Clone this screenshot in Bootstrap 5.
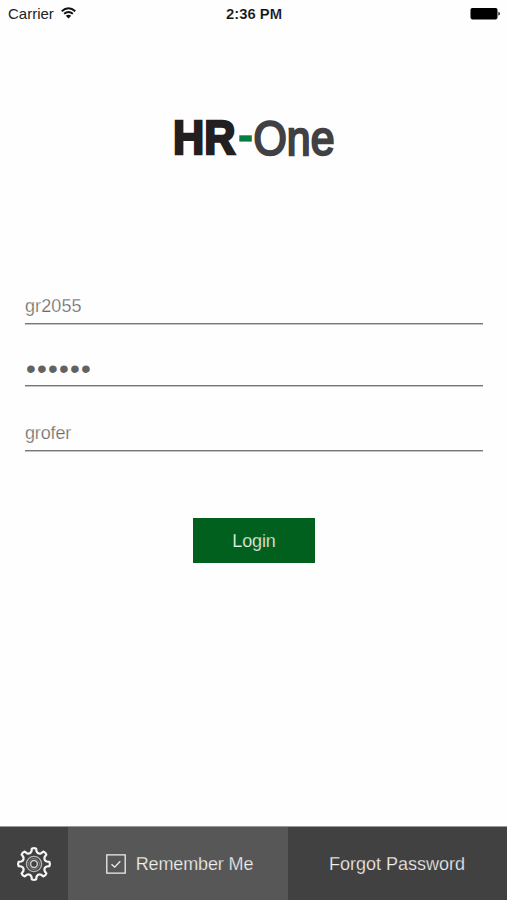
<!DOCTYPE html>
<html lang="en">
<head>
<meta charset="utf-8">
<meta name="viewport" content="width=device-width, initial-scale=1">
<title>HR-One</title>
<link href="https://cdn.jsdelivr.net/npm/bootstrap@5.3.0/dist/css/bootstrap.min.css" rel="stylesheet">
<style>
body { font-family: "Liberation Sans", Arial, sans-serif; font-size: 18px; height: 900px; overflow: hidden; background: #fefefe; }
svg { display: block; }
.status-bar { height: 28px; font-size: 15px; line-height: 28px; color: #222; padding: 0 7px 0 8px; }
.status-bar > div { flex: 1 1 0; }
.status-bar svg { margin-bottom: 2px; }
.wifi { margin-left: 7px; }
.status-time { font-size: 14.8px; text-align: center; color: #111; -webkit-text-stroke: .15px #fefefe; }
.brand { margin-top: 77px; }
.login-form { padding: 0 24px 0 25px; margin-top: 116px; }
.field { border-bottom: 1px solid #777; box-shadow: 0 1px 0 #c4c4c4; color: #6c6c6c; line-height: 24px; display: flex; align-items: flex-end; -webkit-text-stroke: .25px #fefefe; }
.field-user { height: 38px; padding-bottom: 5px; letter-spacing: .1px; }
.field-pass { height: 62px; padding: 0 0 4px 1px; font-size: 28px; letter-spacing: 1.2px; color: #626262; -webkit-text-stroke: 0; }
.field-company { height: 65px; padding-bottom: 5px; letter-spacing: -.15px; }
.btn-login { width: 122px; height: 45px; margin-top: 67px; background: #02601e; color: #f0f5f0; font-size: 18px; letter-spacing: -.1px; -webkit-text-stroke: .25px #02601e; padding-top: 8px; }
.btn-login:hover { background: #02601e; color: #fff; }
.bottom-bar { height: 74px; border-top: 1px solid #999; color: #f2f2f2; background: #414141; }
.bar-settings { width: 68px; }
.bar-remember { width: 220px; gap: 10px; background: #575757; letter-spacing: -.12px; padding-left: 3px; -webkit-text-stroke: .25px #575757; }
.bar-remember span, .bar-forgot { padding-top: 2px; }
.bar-forgot { color: #f2f2f2; -webkit-text-stroke: .25px #414141; padding-right: 1px; }
</style>
</head>
<body class="d-flex flex-column">
<header class="status-bar d-flex align-items-center">
  <div class="d-flex align-items-center">Carrier
    <svg class="wifi" width="15" height="12" viewBox="0 0 15 12" fill="none" stroke="#111" stroke-width="1.9"><path d="M.7 4.2Q7.5-1.8 14.3 4.2M3.1 6.8Q7.5 3 11.9 6.8"/><path d="M7.5 11.6 4.8 8.8Q7.5 6.9 10.2 8.8Z" fill="#111" stroke="none"/></svg>
  </div>
  <div class="status-time fw-bold">2:36 PM</div>
  <div class="d-flex justify-content-end">
    <svg width="30" height="13" viewBox="0 0 30 13"><rect x=".5" y="1" width="27" height="11.4" rx="1.8" fill="#000"/><path d="M28.4 4.8q1.5.3 1.5 1.9T28.4 8.6z" fill="#111"/></svg>
  </div>
</header>
<main class="flex-grow-1 d-flex flex-column">
  <div class="brand d-flex justify-content-center">
    <svg width="181" height="65" viewBox="163 105 181 65" overflow="visible" role="img" aria-label="HR-One" font-size="49">
      <text x="173" y="154.400" font-weight="700" fill="#231f20" stroke="#231f20" stroke-width="2.6" textLength="62.500" lengthAdjust="spacingAndGlyphs">HR</text>
      <rect x="239.300" y="135.300" width="12.500" height="6.300" fill="#087c42"/>
      <text x="253.500" y="154.700" fill="#414042" stroke="#414042" stroke-width="2.300" textLength="81" lengthAdjust="spacingAndGlyphs">One</text>
    </svg>
  </div>
  <form class="login-form">
    <div class="field field-user">gr2055</div>
    <div class="field field-pass">••••••</div>
    <div class="field field-company">grofer</div>
    <div class="d-flex justify-content-center"><button type="button" class="btn btn-login border-0 rounded-0">Login</button></div>
  </form>
</main>
<footer class="bottom-bar d-flex flex-shrink-0">
  <div class="bar-settings d-flex align-items-center justify-content-center">
    <svg width="36" height="36" viewBox="-18 -18 36 36" fill="none" stroke="#f5f5f5"><path id="gear" stroke-width="2.2" stroke-linejoin="round"/><circle r="7.6" stroke="#b5b5b5" stroke-width="1.4"/><circle r="5.4" stroke="#858585" stroke-width="1"/><circle r="3.4" stroke="#ccc" stroke-width="1.5"/></svg>
  </div>
  <div class="bar-remember d-flex align-items-center justify-content-center">
    <svg width="20" height="20" viewBox="0 0 20 20" fill="none" stroke="#f0f0f0" stroke-width="1.3"><path d="M.8.8H19.2V19.2H.8zM5.5 10.2 8.700 13.2 14.3 7.2"/></svg>
    <span>Remember Me</span>
  </div>
  <a class="bar-forgot flex-grow-1 d-flex align-items-center justify-content-center text-decoration-none" href="#">Forgot Password</a>
</footer>
<script>
// Gear outline: eight rounded teeth joined by curved valleys.
const pt = (r, deg) => { const a = deg * Math.PI / 180; return (r * Math.sin(a)).toFixed(2) + ' ' + (-r * Math.cos(a)).toFixed(2); };
let d = 'M' + pt(15.5, -8);
for (let i = 0; i < 8; i++) {
  const a = i * 45;
  d += 'Q' + pt(16.5, a) + ' ' + pt(15.5, a + 8) + 'L' + pt(13, a + 11) + 'Q' + pt(10.2, a + 22.5) + ' ' + pt(13, a + 34) + 'L' + pt(15.5, a + 37);
}
document.getElementById('gear').setAttribute('d', d + 'Z');
</script>
<script src="https://cdn.jsdelivr.net/npm/bootstrap@5.3.0/dist/js/bootstrap.bundle.min.js"></script>
</body>
</html>
